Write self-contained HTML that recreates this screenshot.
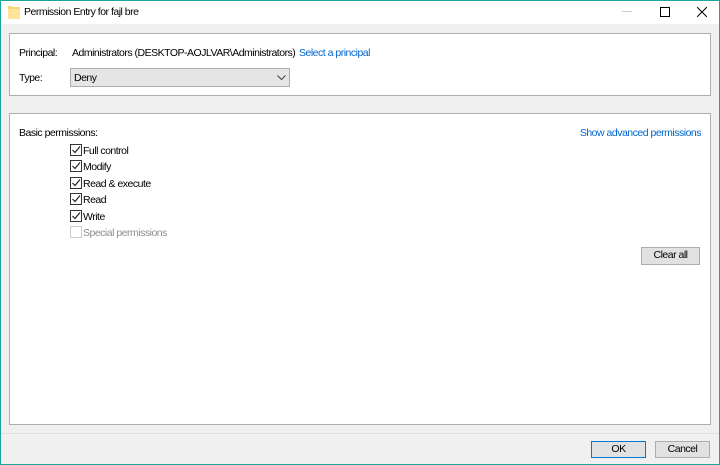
<!DOCTYPE html>
<html><head><meta charset="utf-8"><style>
*{margin:0;padding:0;box-sizing:border-box}
body{width:720px;height:465px;overflow:hidden;background:#f0f0f0;font-family:"Liberation Sans",sans-serif;font-size:10.5px;letter-spacing:-0.5px;color:#000;position:relative}
.win{position:absolute;left:0;top:0;width:720px;height:465px;border:1px solid #1aa89a;z-index:5}
.title{position:absolute;left:0;top:0;width:720px;height:24px;background:#fff}
.abs{position:absolute;white-space:nowrap}
.panel{position:absolute;background:#fff;border:1px solid #adadad}
.link{color:#0066cc}
.cb{position:absolute;left:70px;width:12px;height:12px;border:1px solid #333;background:#fff}
.cb svg{position:absolute;left:0;top:0}
.btn{position:absolute;background:#e1e1e1;border:1px solid #adadad;text-align:center;line-height:15px}
</style></head><body>
<div class="win"></div>
<div class="title">
 <svg class="abs" style="left:8px;top:5px" width="12" height="14" viewBox="0 0 12 14"><path d="M0 1h4l1 1h7v12H0z" fill="#f8d775"/><path d="M0 4h12v10H0z" fill="#ffe59a"/></svg>
 <div class="abs" style="left:24px;top:6px">Permission Entry for fajl bre</div>
 <svg class="abs" style="left:622px;top:11px" width="10" height="1"><rect width="10" height="1" fill="#ccc"/></svg>
 <svg class="abs" style="left:660px;top:7px" width="10" height="10"><rect x=".5" y=".5" width="9" height="9" fill="none" stroke="#000"/></svg>
 <svg class="abs" style="left:697px;top:7px" width="10" height="10"><path d="M0 0L10 10M10 0L0 10" stroke="#000" stroke-width="1"/></svg>
</div>
<div class="panel" style="left:9px;top:33px;width:702px;height:63px">
 <div class="abs" style="left:9px;top:13px">Principal:</div>
 <div class="abs" style="left:62px;top:13px">Administrators (DESKTOP-AOJLVAR\Administrators)</div>
 <div class="abs link" style="left:289px;top:13px">Select a principal</div>
 <div class="abs" style="left:9px;top:38px">Type:</div>
 <div class="abs" style="left:60px;top:34px;width:220px;height:19px;background:#e5e5e5;border:1px solid #adadad"></div>
 <div class="abs" style="left:64px;top:38px">Deny</div>
 <svg class="abs" style="left:267px;top:41px" width="9" height="6"><path d="M.5 .5L4.5 4.5L8.5 .5" fill="none" stroke="#444"/></svg>
</div>
<div class="panel" style="left:9px;top:113px;width:702px;height:312px">
 <div class="abs" style="left:9px;top:13px">Basic permissions:</div>
 <div class="abs link" style="right:9px;top:13px">Show advanced permissions</div>
</div>
<div class="cb" style="top:144px"><svg width="10" height="10"><path d="M1.5 5L4 7.5L9 1.5" fill="none" stroke="#222" stroke-width="1.2"/></svg></div>
<div class="abs" style="left:83px;top:145px">Full control</div>
<div class="cb" style="top:160px"><svg width="10" height="10"><path d="M1.5 5L4 7.5L9 1.5" fill="none" stroke="#222" stroke-width="1.2"/></svg></div>
<div class="abs" style="left:83px;top:161px">Modify</div>
<div class="cb" style="top:177px"><svg width="10" height="10"><path d="M1.5 5L4 7.5L9 1.5" fill="none" stroke="#222" stroke-width="1.2"/></svg></div>
<div class="abs" style="left:83px;top:178px">Read &amp; execute</div>
<div class="cb" style="top:193px"><svg width="10" height="10"><path d="M1.5 5L4 7.5L9 1.5" fill="none" stroke="#222" stroke-width="1.2"/></svg></div>
<div class="abs" style="left:83px;top:194px">Read</div>
<div class="cb" style="top:210px"><svg width="10" height="10"><path d="M1.5 5L4 7.5L9 1.5" fill="none" stroke="#222" stroke-width="1.2"/></svg></div>
<div class="abs" style="left:83px;top:211px">Write</div>
<div class="cb" style="top:226px;border-color:#ccc"></div>
<div class="abs" style="left:83px;top:227px;color:#8d8d8d">Special permissions</div>
<div class="btn" style="left:641px;top:247px;width:59px;height:18px">Clear all</div>
<div class="abs" style="left:0;top:433px;width:720px;height:1px;background:#dfdfdf"></div>
<div class="btn" style="left:591px;top:441px;width:55px;height:17px;border:1px solid #0078d7">OK</div>
<div class="btn" style="left:655px;top:441px;width:55px;height:17px">Cancel</div>
</body></html>
